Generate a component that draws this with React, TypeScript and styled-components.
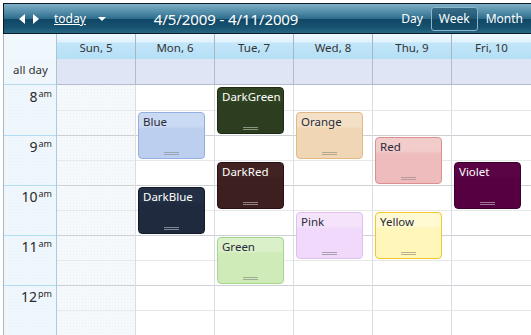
import styled, { createGlobalStyle } from "styled-components";

const GlobalStyle = createGlobalStyle`
  html, body {
    margin: 0;
    padding: 0;
    background: #ffffff;
  }
  body {
    font-family: "Noto Sans", "DejaVu Sans", sans-serif;
    overflow: hidden;
  }
`;

const HOUR = 50;
const FIRST_HOUR = 8;

type Tone = {
  bg: string;
  top: string;
  border: string;
  text: string;
  grip: string;
};

const tones: Record<string, Tone> = {
  Blue: { bg: "#bccfee", top: "#cbdaf3", border: "#92b0df", text: "#2a2a3a", grip: "#9aa6b8" },
  Orange: { bg: "#f0d6b4", top: "#f4e0c6", border: "#e2b986", text: "#2a2a3a", grip: "#b8a58e" },
  Red: { bg: "#eebcbc", top: "#f2cbcb", border: "#db8f90", text: "#2a2a3a", grip: "#b89a9a" },
  Pink: { bg: "#f0d9fa", top: "#f4e3fb", border: "#e0bff2", text: "#2a2a3a", grip: "#aa9fb0" },
  Yellow: { bg: "#fff6b9", top: "#fffad2", border: "#f1c734", text: "#2a2a3a", grip: "#b8b08e" },
  Green: { bg: "#cfebb8", top: "#daf0c8", border: "#a4d58a", text: "#2a2a3a", grip: "#9ead96" },
  DarkGreen: { bg: "#2c3e1f", top: "#2f4222", border: "#1d2b12", text: "#ffffff", grip: "#8a9380" },
  DarkRed: { bg: "#3e1f1f", top: "#422323", border: "#2a1212", text: "#ffffff", grip: "#948080" },
  DarkBlue: { bg: "#1f2a3f", top: "#232f45", border: "#121a2a", text: "#ffffff", grip: "#808898" },
  Violet: { bg: "#560042", top: "#5a0446", border: "#3c002d", text: "#ffffff", grip: "#a07a96" },
};

type CalEvent = { title: string; day: number; start: number; end: number };

const events: CalEvent[] = [
  { title: "Blue", day: 1, start: 8.5, end: 9.5 },
  { title: "DarkBlue", day: 1, start: 10, end: 11 },
  { title: "DarkGreen", day: 2, start: 8, end: 9 },
  { title: "DarkRed", day: 2, start: 9.5, end: 10.5 },
  { title: "Green", day: 2, start: 11, end: 12 },
  { title: "Orange", day: 3, start: 8.5, end: 9.5 },
  { title: "Pink", day: 3, start: 10.5, end: 11.5 },
  { title: "Red", day: 4, start: 9, end: 10 },
  { title: "Yellow", day: 4, start: 10.5, end: 11.5 },
  { title: "Violet", day: 5, start: 9.5, end: 10.5 },
];

const days = ["Sun, 5", "Mon, 6", "Tue, 7", "Wed, 8", "Thu, 9", "Fri, 10"];
const hours = [
  { n: "8", s: "am" },
  { n: "9", s: "am" },
  { n: "10", s: "am" },
  { n: "11", s: "am" },
  { n: "12", s: "pm" },
];

const Page = styled.div`
  height: 335px;
  overflow: hidden;
  padding: 3px 0 0 3px;
  box-sizing: border-box;
`;

const Toolbar = styled.div`
  height: 31px;
  box-sizing: border-box;
  border: 1px solid #0b1a24;
  border-right: none;
  display: flex;
  align-items: center;
  color: #ffffff;
  background: linear-gradient(
    to bottom,
    #7eb0c6 0%,
    #4f8aa6 30%,
    #2f6d8d 50%,
    #0f4766 52%,
    #17526f 80%,
    #266783 100%
  );
`;

const NavArrows = styled.div`
  display: flex;
  gap: 8px;
  margin-left: 15px;
  align-items: center;
`;

const Arrow = styled.span<{ $dir: "left" | "right" }>`
  width: 0;
  height: 0;
  border-top: 5px solid transparent;
  border-bottom: 5px solid transparent;
  ${(p) =>
    p.$dir === "left"
      ? "border-right: 6px solid #ffffff;"
      : "border-left: 6px solid #ffffff;"}
`;

const TodayLink = styled.span`
  margin-left: 15px;
  font-size: 12px;
  text-decoration: underline;
  color: #ffffff;
`;

const Caret = styled.span`
  margin-left: 12px;
  width: 0;
  height: 0;
  border-left: 4px solid transparent;
  border-right: 4px solid transparent;
  border-top: 4px solid #ffffff;
`;

const RangeTitle = styled.div`
  margin-left: 48px;
  font-size: 15px;
  letter-spacing: -0.1px;
`;

const ViewSwitch = styled.div`
  margin-left: auto;
  display: flex;
  align-items: center;
`;

const ViewButton = styled.span<{ $active?: boolean }>`
  font-size: 12px;
  padding: 2px 7px 3px;
  border-radius: 3px;
  border: 1px solid ${(p) => (p.$active ? "#8bb6ca" : "transparent")};
  background: ${(p) => (p.$active ? "rgba(20, 70, 95, 0.55)" : "transparent")};
`;

const Columns = styled.div`
  display: grid;
  grid-template-columns: 54px repeat(6, 79px);
`;

const CornerCell = styled.div`
  height: 25px;
  box-sizing: border-box;
  border-left: 1px solid #a9b8c4;
  border-right: 1px solid #a9c4d6;
  background: #f1f8fd;
`;

const DayHead = styled.div<{ $last?: boolean }>`
  height: 25px;
  box-sizing: border-box;
  border-right: ${(p) => (p.$last ? "none" : "1px solid #a8b6c2")};
  display: flex;
  align-items: center;
  justify-content: center;
  padding-top: 1px;
  font-size: 11.5px;
  color: #333333;
  background: linear-gradient(
    to bottom,
    #eef8fe 0%,
    #e2f3fd 30%,
    #c3e6f9 36%,
    #b4dff6 100%
  );
`;

const AllDayLabel = styled.div`
  height: 26px;
  box-sizing: border-box;
  border-left: 1px solid #a9b8c4;
  border-right: 1px solid #a9c4d6;
  border-bottom: 1px solid #b5d9ee;
  background: #eff7fd;
  font-size: 11.5px;
  color: #333333;
  padding: 3px 0 0 9px;
`;

const AllDayCell = styled.div<{ $last?: boolean }>`
  height: 26px;
  box-sizing: border-box;
  background: #dfe5f4;
  border-right: ${(p) => (p.$last ? "none" : "1px solid #b4bccb")};
  border-bottom: 1px solid #b4bccb;
`;

const Gutter = styled.div`
  box-sizing: border-box;
  border-left: 1px solid #a9b8c4;
  border-right: 1px solid #a9cbe2;
  background-color: #f0f7fc;
  background-image: radial-gradient(#e8f2fa 0.6px, transparent 0.7px);
  background-size: 3px 3px;
`;

const HourLabel = styled.div`
  height: ${HOUR}px;
  box-sizing: border-box;
  border-top: 1px solid #b3ddf3;
  display: flex;
  justify-content: flex-end;
  padding: 2px 4px 0 0;
  color: #2a2a2a;
  &:first-child {
    border-top: none;
    padding-top: 3px;
  }
`;

const HourNum = styled.span`
  font-size: 14px;
  line-height: 17px;
`;

const HourSuffix = styled.span`
  font-size: 9px;
  line-height: 11px;
  margin-left: 1px;
`;

const DayColumn = styled.div<{ $weekend?: boolean; $last?: boolean }>`
  position: relative;
  box-sizing: border-box;
  border-right: ${(p) => (p.$last ? "none" : "1px solid #dadde2")};
  background-color: ${(p) => (p.$weekend ? "#f5f9fc" : "#ffffff")};
  ${(p) =>
    p.$weekend
      ? `background-image: radial-gradient(#ebf1f7 0.6px, transparent 0.7px);
         background-size: 3px 3px;`
      : ""}
`;

const Slot = styled.div<{ $half: boolean; $first: boolean }>`
  height: ${HOUR / 2}px;
  box-sizing: border-box;
  border-top: ${(p) =>
    p.$first ? "none" : p.$half ? "1px solid #e8e8e8" : "1px solid #cdd0d4"};
`;

const EventBox = styled.div<{ $tone: Tone; $start: number; $end: number }>`
  position: absolute;
  left: 2px;
  width: 67px;
  top: ${(p) => (p.$start - FIRST_HOUR) * HOUR + 2}px;
  height: ${(p) => (p.$end - p.$start) * HOUR - 3}px;
  box-sizing: border-box;
  border: 1px solid ${(p) => p.$tone.border};
  border-radius: 4px;
  background: linear-gradient(
    to bottom,
    ${(p) => p.$tone.top} 0px,
    ${(p) => p.$tone.top} 13px,
    ${(p) => p.$tone.bg} 16px,
    ${(p) => p.$tone.bg} 100%
  );
  color: ${(p) => p.$tone.text};
  font-size: 11.5px;
  line-height: 14px;
  padding: 2px 0 0 4px;
  overflow: hidden;
`;

const Grip = styled.div<{ $color: string }>`
  position: absolute;
  bottom: 3px;
  left: 50%;
  margin-left: -8px;
  width: 15px;
  height: 3px;
  border-top: 1px solid ${(p) => p.$color};
  border-bottom: 1px solid ${(p) => p.$color};
  box-sizing: border-box;
`;

export default function App() {
  return (
    <>
      <GlobalStyle />
      <Page>
        <Toolbar>
          <NavArrows>
            <Arrow $dir="left" />
            <Arrow $dir="right" />
          </NavArrows>
          <TodayLink>today</TodayLink>
          <Caret />
          <RangeTitle>4/5/2009 - 4/11/2009</RangeTitle>
          <ViewSwitch>
            <ViewButton>Day</ViewButton>
            <ViewButton $active>Week</ViewButton>
            <ViewButton>Month</ViewButton>
          </ViewSwitch>
        </Toolbar>
        <Columns>
          <CornerCell />
          {days.map((d, i) => (
            <DayHead key={d} $last={i === days.length - 1}>
              {d}
            </DayHead>
          ))}
          <AllDayLabel>all day</AllDayLabel>
          {days.map((d, i) => (
            <AllDayCell key={d} $last={i === days.length - 1} />
          ))}
          <Gutter>
            {hours.map((h) => (
              <HourLabel key={h.n + h.s}>
                <HourNum>{h.n}</HourNum>
                <HourSuffix>{h.s}</HourSuffix>
              </HourLabel>
            ))}
          </Gutter>
          {days.map((d, di) => (
            <DayColumn key={d} $weekend={di === 0} $last={di === days.length - 1}>
              {Array.from({ length: hours.length * 2 }).map((_, si) => (
                <Slot key={si} $half={si % 2 === 1} $first={si === 0} />
              ))}
              {events
                .filter((e) => e.day === di)
                .map((e) => (
                  <EventBox
                    key={e.title}
                    $tone={tones[e.title]}
                    $start={e.start}
                    $end={e.end}
                  >
                    {e.title}
                    <Grip $color={tones[e.title].grip} />
                  </EventBox>
                ))}
            </DayColumn>
          ))}
        </Columns>
      </Page>
    </>
  );
}
